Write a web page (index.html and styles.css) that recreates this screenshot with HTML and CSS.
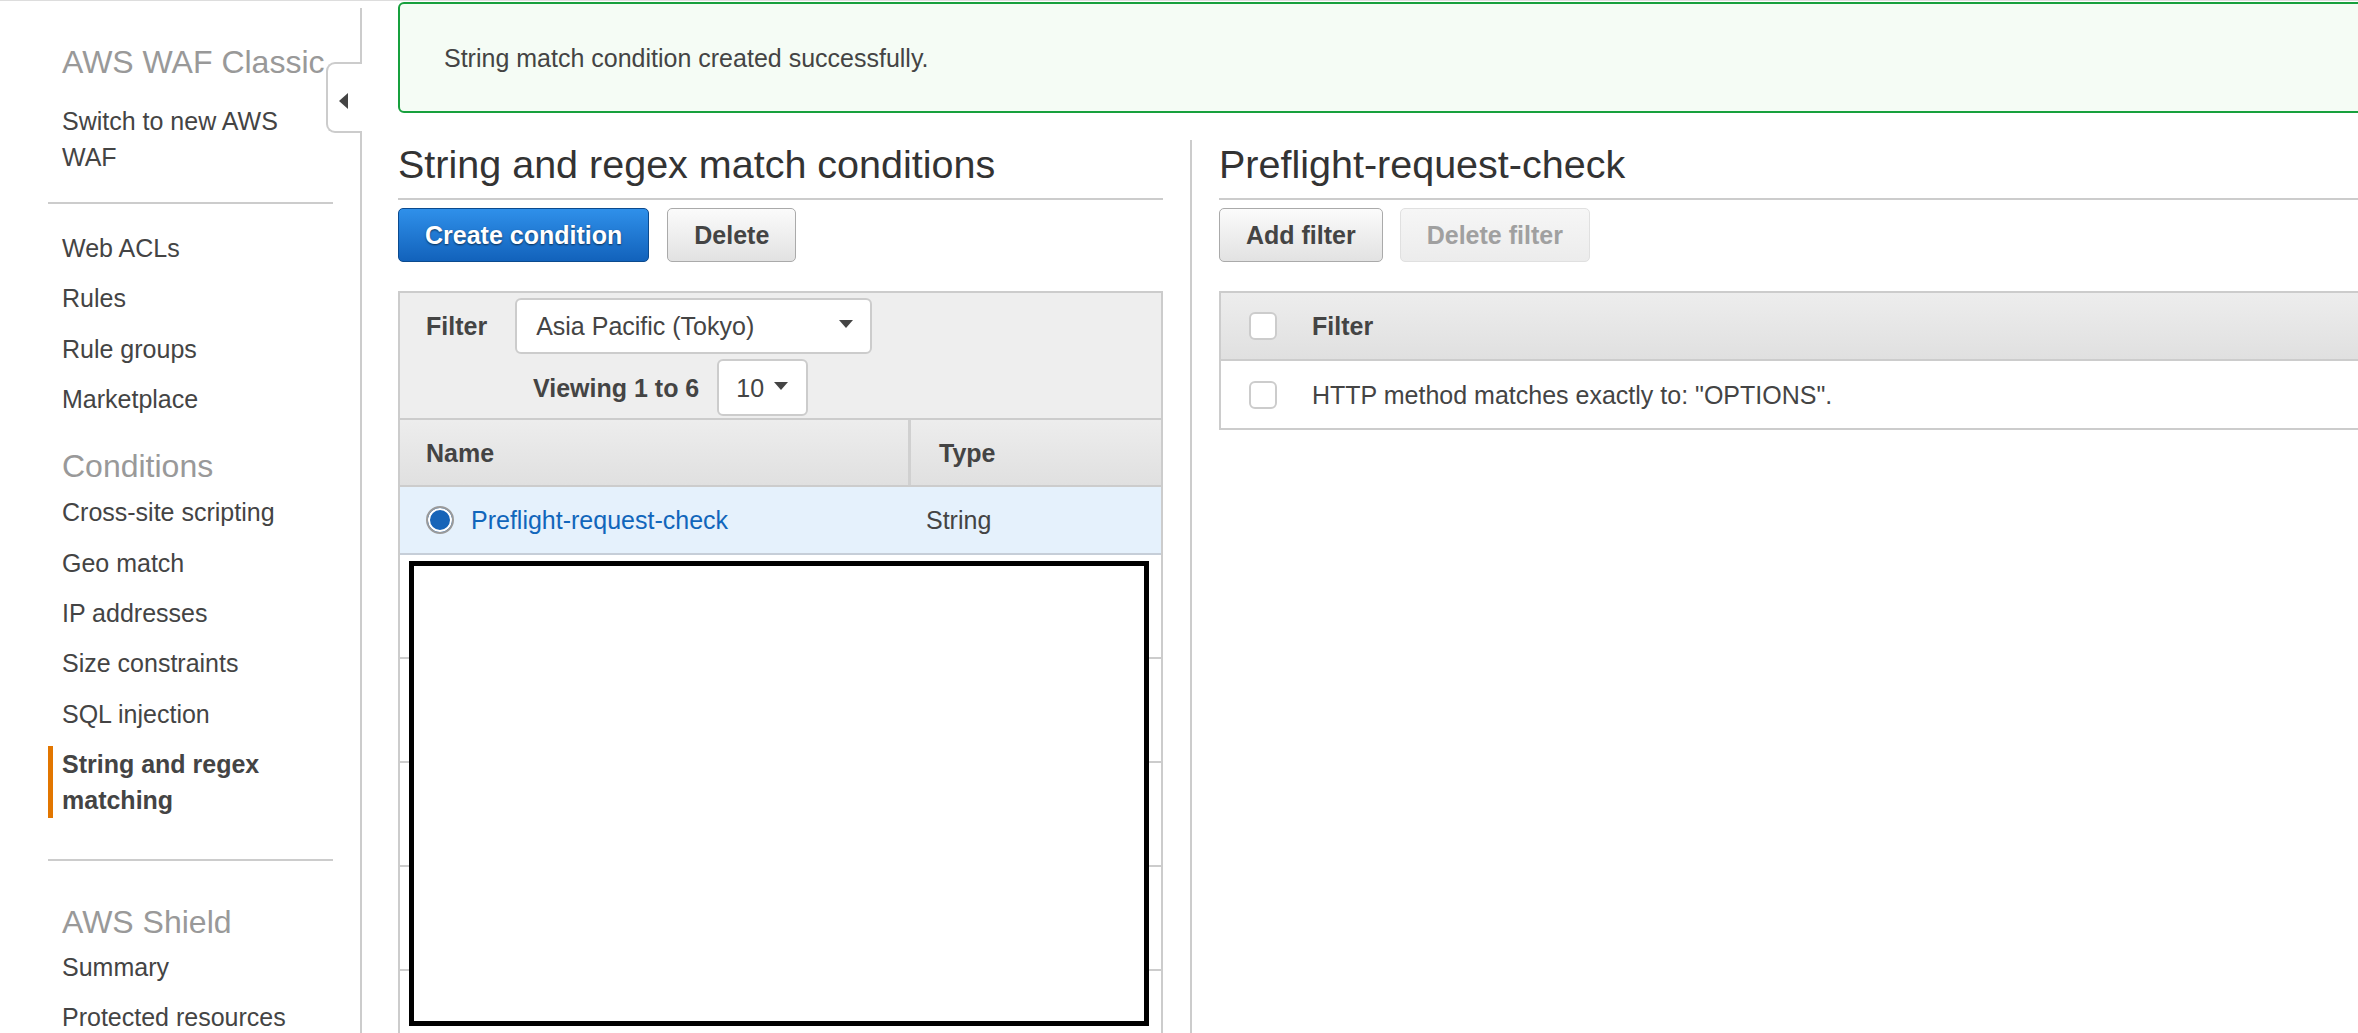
FILE: index.html
```html
<!DOCTYPE html>
<html lang="en">
<head>
<meta charset="utf-8">
<title>AWS WAF Classic - String and regex match conditions</title>
<link rel="stylesheet" href="styles.css">
</head>
<body>
<div class="page">
  <aside class="sidebar">
    <div class="side-tab"><span class="tab-arrow"></span></div>
    <h2 class="side-heading side-heading-top">AWS WAF Classic</h2>
    <ul class="nav">
      <li class="nav-item">Switch to new AWS WAF</li>
    </ul>
    <hr class="side-sep side-sep-top">
    <ul class="nav">
      <li class="nav-item">Web ACLs</li>
      <li class="nav-item">Rules</li>
      <li class="nav-item">Rule groups</li>
      <li class="nav-item">Marketplace</li>
    </ul>
    <h2 class="side-heading side-heading-mid">Conditions</h2>
    <ul class="nav">
      <li class="nav-item">Cross-site scripting</li>
      <li class="nav-item">Geo match</li>
      <li class="nav-item">IP addresses</li>
      <li class="nav-item">Size constraints</li>
      <li class="nav-item">SQL injection</li>
      <li class="nav-item nav-item-active">String and regex matching</li>
    </ul>
    <hr class="side-sep side-sep-bottom">
    <h2 class="side-heading side-heading-shield">AWS Shield</h2>
    <ul class="nav">
      <li class="nav-item">Summary</li>
      <li class="nav-item">Protected resources</li>
    </ul>
  </aside>

  <main class="main">
    <div class="alert">String match condition created successfully.</div>

    <div class="cols">
      <section class="col-left">
        <h1 class="title">String and regex match conditions</h1>
        <div class="actions">
          <button class="btn btn-primary">Create condition</button>
          <button class="btn">Delete</button>
        </div>

        <div class="tbl">
          <div class="filter-bar">
            <div class="filter-row">
              <span class="filter-label">Filter</span>
              <div class="select select-region"><span>Asia Pacific (Tokyo)</span><span class="caret"></span></div>
            </div>
            <div class="paging-row">
              <span class="filter-label">Viewing 1 to 6</span>
              <div class="select select-size"><span>10</span><span class="caret"></span></div>
            </div>
          </div>
          <div class="thead">
            <div class="th th-name">Name</div>
            <div class="th th-type">Type</div>
          </div>
          <div class="tr tr-selected">
            <div class="td td-name"><span class="radio"></span><span class="link">Preflight-request-check</span></div>
            <div class="td td-type">String</div>
          </div>
          <div class="tr tr-blank"></div>
          <div class="tr tr-blank"></div>
          <div class="tr tr-blank"></div>
          <div class="tr tr-blank"></div>
          <div class="tr tr-blank"></div>
          <div class="redact"></div>
        </div>
      </section>

      <section class="col-right">
        <h1 class="title">Preflight-request-check</h1>
        <div class="actions actions-right">
          <button class="btn">Add filter</button>
          <button class="btn btn-disabled">Delete filter</button>
        </div>

        <div class="tbl tbl-right">
          <div class="fhead">
            <span class="checkbox"></span>
            <span class="fhead-label">Filter</span>
          </div>
          <div class="frow">
            <span class="checkbox"></span>
            <span>HTTP method matches exactly to: "OPTIONS".</span>
          </div>
        </div>
      </section>
    </div>
  </main>
</div>
</body>
</html>
```

FILE: styles.css
```css
* {
  box-sizing: border-box;
}

html,
body {
  margin: 0;
  height: 100%;
}

body {
  font-family: "Liberation Sans", Arial, Helvetica, sans-serif;
  font-size: 25px;
  line-height: 36px;
  color: #444;
  background: #fff;
  overflow: hidden;
}

.page {
  display: flex;
  height: 100vh;
  border-top: 1px solid #ddd;
}

/* ---------- sidebar ---------- */
.sidebar {
  position: relative;
  flex: none;
  width: 362px;
  margin-top: 7px;
  border-right: 2px solid #ccc;
  padding: 33.6px 0 0 48px;
}

.side-tab {
  position: absolute;
  left: 326px;
  right: -2px;
  top: 54px;
  height: 71px;
  background: #fff;
  border: 2px solid #ccc;
  border-right: none;
  border-radius: 9px 0 0 9px;
  display: flex;
  align-items: center;
  padding: 6px 0 0 11px;
}

.tab-arrow {
  width: 0;
  height: 0;
  border-top: 8px solid transparent;
  border-bottom: 8px solid transparent;
  border-right: 9px solid #444;
}

.side-heading {
  margin: 0;
  padding-left: 14px;
  font-size: 32px;
  line-height: 40px;
  font-weight: normal;
  color: #999;
  width: 285px;
  white-space: nowrap;
}

.side-heading-top {
  margin-bottom: 14px;
}

.side-heading-mid {
  margin-top: 21.8px;
  margin-bottom: 0.9px;
}

.nav {
  list-style: none;
  margin: 0;
  padding: 0;
  width: 285px;
  display: flex;
  flex-direction: column;
}

.nav-item {
  margin: 7.2px 0;
  padding-left: 9px;
  border-left: 5px solid transparent;
}

.nav-item-active {
  font-weight: bold;
  border-left-color: #e27600;
}

.side-sep {
  width: 285px;
  height: 2px;
  border: 0;
  background: #ccc;
  margin: 0;
}

.side-sep-top {
  margin-top: 20px;
  margin-bottom: 18.8px;
}

.side-sep-bottom {
  margin-top: 33.5px;
  margin-bottom: 41px;
}

/* ---------- main ---------- */
.main {
  flex: 1;
  min-width: 0;
  margin-right: -40px;
  padding-left: 36px;
  display: flex;
  flex-direction: column;
}

.alert {
  margin-top: 1px;
  border: 2px solid #17a03d;
  border-radius: 6px;
  background: #f5fcf5;
  padding: 36px 0 35px 44px;
}

.cols {
  flex: 1;
  display: flex;
  margin-top: 27px;
}

.col-left {
  flex: none;
  width: 765px;
}

.col-right {
  flex: 1;
  min-width: 0;
  margin-left: 27px;
  border-left: 2px solid #ccc;
  padding-left: 27px;
}

.title {
  margin: 2px 0 0;
  font-size: 39.5px;
  line-height: 44px;
  font-weight: normal;
  color: #333;
  padding-bottom: 12px;
  border-bottom: 2px solid #ccc;
  white-space: nowrap;
}

.actions {
  display: flex;
  gap: 18px;
  margin-top: 8px;
}

.actions-right {
  gap: 17px;
}

.btn {
  height: 54px;
  padding: 0 26px;
  border: 1px solid #aaa;
  border-radius: 5px;
  background: linear-gradient(#fbfbfb, #e2e2e2);
  color: #444;
  font-family: "Liberation Sans", Arial, Helvetica, sans-serif;
  font-size: 25px;
  font-weight: bold;
  line-height: 1;
}

.btn-primary {
  background: linear-gradient(#2f90ea, #1262bb);
  border-color: #0b4a8e;
  color: #fff;
  text-shadow: 0 1px 2px rgba(0, 0, 0, 0.6);
}

.btn-disabled {
  background: linear-gradient(#f6f6f6, #ececec);
  border-color: #e0e0e0;
  color: #a0a0a0;
}

/* ---------- tables ---------- */
.tbl {
  position: relative;
  margin-top: 29px;
  border: 2px solid #ccc;
}

.filter-bar {
  background: #eee;
  border-bottom: 2px solid #ccc;
  padding: 5px 0 2px;
}

.filter-row {
  display: flex;
  align-items: center;
  gap: 28px;
  padding-left: 26px;
}

.paging-row {
  display: flex;
  align-items: center;
  gap: 18px;
  padding-left: 133px;
  margin-top: 5px;
}

.filter-label {
  font-weight: bold;
}

.select {
  display: flex;
  align-items: center;
  justify-content: space-between;
  background: #fff;
  border: 2px solid #ccc;
  border-radius: 6px;
}

.select-region {
  width: 357px;
  height: 56px;
  padding: 0 17px 0 19px;
}

.select-size {
  width: 91px;
  height: 57px;
  padding: 0 18px 0 17px;
}

.caret {
  width: 0;
  height: 0;
  border-left: 7px solid transparent;
  border-right: 7px solid transparent;
  border-top: 8px solid #444;
  margin-top: -4px;
}

.thead {
  display: grid;
  grid-template-columns: 511px 1fr;
  height: 67px;
  background: linear-gradient(#ededed, #e0e0e0);
  border-bottom: 2px solid #ccc;
}

.th {
  display: flex;
  align-items: center;
  font-weight: bold;
}

.th-name {
  padding-left: 26px;
  border-right: 3px solid #d0d0d0;
}

.th-type {
  padding-left: 28px;
}

.tr {
  display: grid;
  grid-template-columns: 508px 1fr;
}

.tr-selected {
  height: 68px;
  background: #e5f1fc;
  border-bottom: 2px solid #c6ced8;
}

.td {
  display: flex;
  align-items: center;
}

.td-name {
  padding-left: 26px;
  gap: 17px;
}

.td-type {
  padding-left: 18px;
}

.radio {
  flex: none;
  width: 28px;
  height: 28px;
  border-radius: 50%;
  border: 2px solid #9a9a9a;
  background: #1764b8;
  box-shadow: inset 0 0 0 2px #fff;
}

.link {
  color: #1166bb;
}

.tr-blank {
  height: 104px;
  border-bottom: 2px solid #ccc;
}

.redact {
  position: absolute;
  left: 9px;
  top: 268px;
  width: 740px;
  height: 465px;
  border: 5px solid #000;
  background: #fff;
}

.fhead {
  display: flex;
  align-items: center;
  height: 68px;
  padding-left: 28px;
  gap: 35px;
  background: linear-gradient(#ededed, #e0e0e0);
  border-bottom: 2px solid #ccc;
}

.fhead-label {
  font-weight: bold;
}

.frow {
  display: flex;
  align-items: center;
  height: 67px;
  padding-left: 28px;
  gap: 35px;
}

.checkbox {
  flex: none;
  width: 28px;
  height: 28px;
  background: #fff;
  border: 2px solid #ccc;
  border-radius: 6px;
}
```
